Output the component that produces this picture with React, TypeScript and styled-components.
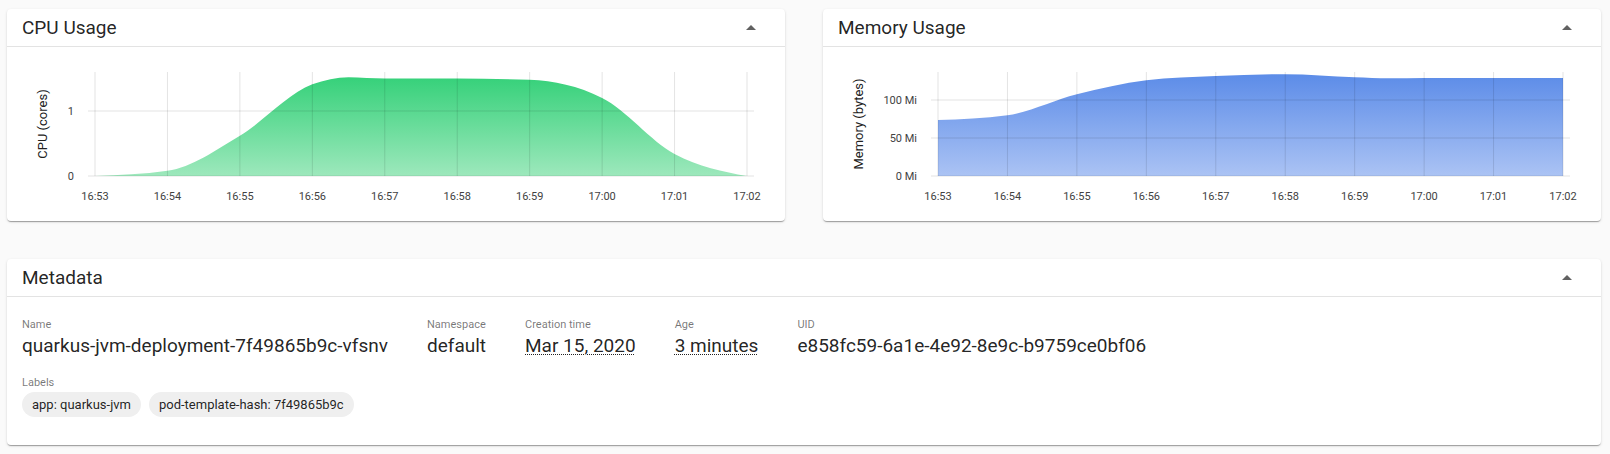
import React from "react";
import styled, { createGlobalStyle } from "styled-components";

const GlobalStyle = createGlobalStyle`
  html, body { margin: 0; padding: 0; background: #fafafa; }
  body { font-family: Roboto, "Liberation Sans", Arial, sans-serif; color: rgba(0,0,0,0.87); }
  * { box-sizing: border-box; }
`;

const Page = styled.div`
  padding: 9px 9px 9px 7px;
  display: flex;
  flex-direction: column;
  gap: 38px;
`;

const ChartRow = styled.div`
  display: grid;
  grid-template-columns: 1fr 1fr;
  column-gap: 38px;
`;

const Card = styled.section`
  background: #fff;
  border-radius: 4px;
  box-shadow: 0px 2px 1px -1px rgba(0,0,0,0.2), 0px 1px 1px 0px rgba(0,0,0,0.14), 0px 1px 3px 0px rgba(0,0,0,0.12);
  overflow: hidden;
`;

const CardHeader = styled.header`
  height: 38px;
  display: flex;
  align-items: center;
  justify-content: space-between;
  padding: 0 22px 0 15px;
  border-bottom: 1px solid #e3e3e3;
`;

const Title = styled.h2`
  margin: 0;
  font-size: 19px;
  font-weight: 400;
  line-height: 1;
  color: rgba(0,0,0,0.87);
`;

const CollapseIcon = styled.svg`
  width: 24px;
  height: 24px;
  fill: #616161;
  display: block;
`;

const ChartBody = styled.div`
  height: 174px;
`;

const ChartSvg = styled.svg`
  display: block;
  width: 100%;
  height: 174px;
  font-family: Roboto, "Liberation Sans", Arial, sans-serif;
`;

const MetaBody = styled.div`
  padding: 21px 15px 28px;
  display: flex;
  flex-direction: column;
  gap: 16px;
`;

const FieldRow = styled.div`
  display: flex;
  column-gap: 39px;
`;

const Field = styled.div`
  display: flex;
  flex-direction: column;
`;

const FieldLabel = styled.div`
  font-size: 11px;
  line-height: 14px;
  color: rgba(0,0,0,0.54);
`;

const FieldValue = styled.div<{ $dotted?: boolean }>`
  font-size: 19px;
  line-height: 28px;
  color: rgba(0,0,0,0.87);
  white-space: nowrap;
  span {
    text-decoration: ${(p) => (p.$dotted ? "underline dotted" : "none")};
    text-decoration-thickness: 1px;
    text-underline-offset: 2px;
  }
`;

const ChipList = styled.div`
  display: flex;
  gap: 8px;
  margin-top: 2px;
`;

const Chip = styled.span`
  display: inline-flex;
  align-items: center;
  height: 25px;
  padding: 0 10px;
  border-radius: 13px;
  background: #efefef;
  font-size: 13px;
  color: rgba(0,0,0,0.87);
  white-space: nowrap;
`;

type Pt = [number, number];

function monotonePath(pts: Pt[]): string {
  const n = pts.length;
  const t: number[] = new Array(n).fill(0);
  const sgn = (v: number) => (v < 0 ? -1 : v > 0 ? 1 : 0);
  for (let i = 1; i < n - 1; i++) {
    const [x0, y0] = pts[i - 1];
    const [x1, y1] = pts[i];
    const [x2, y2] = pts[i + 1];
    const h0 = x1 - x0, h1 = x2 - x1;
    const s0 = (y1 - y0) / h0, s1 = (y2 - y1) / h1;
    const p = (s0 * h1 + s1 * h0) / (h0 + h1);
    t[i] = (sgn(s0) + sgn(s1)) * Math.min(Math.abs(s0), Math.abs(s1), 0.5 * Math.abs(p)) || 0;
  }
  const s2 = (a: Pt, b: Pt, tt: number) => {
    const h = b[0] - a[0];
    return h ? (3 * (b[1] - a[1]) / h - tt) / 2 : tt;
  };
  t[0] = s2(pts[0], pts[1], t[1]);
  t[n - 1] = s2(pts[n - 2], pts[n - 1], t[n - 2]);
  let d = `M${pts[0][0].toFixed(2)},${pts[0][1].toFixed(2)}`;
  for (let i = 0; i < n - 1; i++) {
    const [x0, y0] = pts[i];
    const [x1, y1] = pts[i + 1];
    const dx = (x1 - x0) / 3;
    d += `C${(x0 + dx).toFixed(2)},${(y0 + dx * t[i]).toFixed(2)},${(x1 - dx).toFixed(2)},${(y1 - dx * t[i + 1]).toFixed(2)},${x1.toFixed(2)},${y1.toFixed(2)}`;
  }
  return d;
}

const TIMES = ["16:53", "16:54", "16:55", "16:56", "16:57", "16:58", "16:59", "17:00", "17:01", "17:02"];

interface ChartProps {
  id: string;
  axisX: number;
  yLabel: string;
  yTicks: { value: number; label: string }[];
  pxPerUnit: number;
  data: [number, number][];
  topColor: string;
  bottomColor: string;
}

const PLOT_TOP = 25;
const BASE = 129;
const PLOT_RIGHT = 740;
const GRID_RIGHT = 747;

function AreaChart({ id, axisX, yLabel, yTicks, pxPerUnit, data, topColor, bottomColor }: ChartProps) {
  const step = (PLOT_RIGHT - axisX) / 9;
  const pts: Pt[] = data.map(([m, v]) => [axisX + m * step, BASE - v * pxPerUnit]);
  const line = monotonePath(pts);
  const area = `${line}L${PLOT_RIGHT},${BASE}L${axisX},${BASE}Z`;
  const gridColor = "rgba(0,0,0,0.11)";
  return (
    <ChartSvg viewBox="0 0 778 174" preserveAspectRatio="none">
      <defs>
        <linearGradient id={id} x1="0" y1="0" x2="0" y2="1">
          <stop offset="0%" stopColor={topColor} />
          <stop offset="100%" stopColor={bottomColor} />
        </linearGradient>
      </defs>
      <path d={area} fill={`url(#${id})`} />
      {yTicks.map((t) => (
        <line key={t.label} x1={axisX - 7} x2={GRID_RIGHT} y1={BASE - t.value * pxPerUnit} y2={BASE - t.value * pxPerUnit} stroke={gridColor} strokeWidth={1} />
      ))}
      {TIMES.map((_, i) => (
        <line key={i} x1={axisX + i * step} x2={axisX + i * step} y1={PLOT_TOP} y2={BASE} stroke={gridColor} strokeWidth={1} />
      ))}
      {yTicks.map((t) => (
        <text key={t.label} x={axisX - 21} y={BASE - t.value * pxPerUnit + 4} fontSize={11} fill="#424242" textAnchor="end">
          {t.label}
        </text>
      ))}
      {TIMES.map((label, i) => (
        <text key={label} x={axisX + i * step} y={153} fontSize={11} fill="#424242" textAnchor="middle">
          {label}
        </text>
      ))}
      <text x={35} y={77} fontSize={13} fill="#212121" textAnchor="middle" transform="rotate(-90 35 77)" dominantBaseline="central">
        {yLabel}
      </text>
    </ChartSvg>
  );
}

function ArrowUp() {
  return (
    <CollapseIcon viewBox="0 0 24 24" aria-hidden="true">
      <path d="M7 14l5-5 5 5z" />
    </CollapseIcon>
  );
}

const cpuData: [number, number][] = [
  [0, 0], [1, 0.08], [2, 0.62], [3, 1.41], [3.5, 1.52], [4, 1.5], [5, 1.5], [6, 1.48], [7, 1.2], [8, 0.34], [9, 0],
];

const memData: [number, number][] = [
  [0, 73.7], [1, 80], [2, 107.5], [3, 126], [4, 131.6], [5, 134], [6, 130], [6.5, 128.6], [7, 129], [8, 129], [9, 129],
];

export default function App() {
  return (
    <>
      <GlobalStyle />
      <Page>
        <ChartRow>
          <Card>
            <CardHeader>
              <Title>CPU Usage</Title>
              <ArrowUp />
            </CardHeader>
            <ChartBody>
              <AreaChart
                id="cpuFill"
                axisX={88}
                yLabel="CPU (cores)"
                yTicks={[{ value: 0, label: "0" }, { value: 1, label: "1" }]}
                pxPerUnit={65}
                data={cpuData}
                topColor="#36d17a"
                bottomColor="#9de8bc"
              />
            </ChartBody>
          </Card>
          <Card>
            <CardHeader>
              <Title>Memory Usage</Title>
              <ArrowUp />
            </CardHeader>
            <ChartBody>
              <AreaChart
                id="memFill"
                axisX={115}
                yLabel="Memory (bytes)"
                yTicks={[{ value: 0, label: "0 Mi" }, { value: 50, label: "50 Mi" }, { value: 100, label: "100 Mi" }]}
                pxPerUnit={0.76}
                data={memData}
                topColor="#5c8ce8"
                bottomColor="#abc3f4"
              />
            </ChartBody>
          </Card>
        </ChartRow>
        <Card>
          <CardHeader>
            <Title>Metadata</Title>
            <ArrowUp />
          </CardHeader>
          <MetaBody>
            <FieldRow>
              <Field>
                <FieldLabel>Name</FieldLabel>
                <FieldValue><span>quarkus-jvm-deployment-7f49865b9c-vfsnv</span></FieldValue>
              </Field>
              <Field>
                <FieldLabel>Namespace</FieldLabel>
                <FieldValue><span>default</span></FieldValue>
              </Field>
              <Field>
                <FieldLabel>Creation time</FieldLabel>
                <FieldValue $dotted><span>Mar 15, 2020</span></FieldValue>
              </Field>
              <Field>
                <FieldLabel>Age</FieldLabel>
                <FieldValue $dotted><span>3 minutes</span></FieldValue>
              </Field>
              <Field>
                <FieldLabel>UID</FieldLabel>
                <FieldValue><span>e858fc59-6a1e-4e92-8e9c-b9759ce0bf06</span></FieldValue>
              </Field>
            </FieldRow>
            <Field>
              <FieldLabel>Labels</FieldLabel>
              <ChipList>
                <Chip>app: quarkus-jvm</Chip>
                <Chip>pod-template-hash: 7f49865b9c</Chip>
              </ChipList>
            </Field>
          </MetaBody>
        </Card>
      </Page>
    </>
  );
}
